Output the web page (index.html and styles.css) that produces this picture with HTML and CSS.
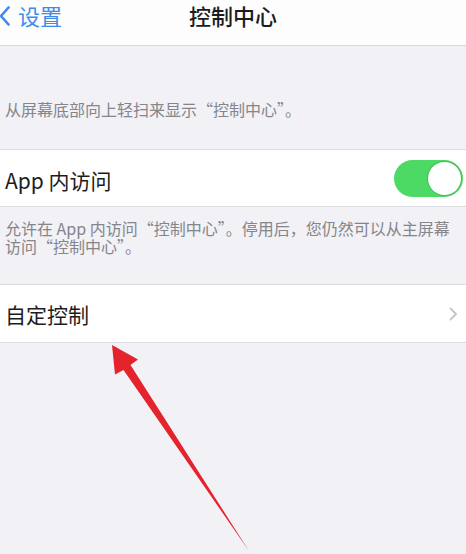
FILE: index.html
```html
<!DOCTYPE html>
<html lang="zh-CN">
<head>
<meta charset="utf-8">
<title>控制中心</title>
<link rel="stylesheet" href="styles.css">
</head>
<body>
<div class="page">
  <header class="nav">
    <div class="back">
      <svg class="back-icon" width="11" height="20" viewBox="0 0 11 20"><path d="M9.5 1.5 L2 10 L9.5 18.5" fill="none" stroke="#3d8bea" stroke-width="2.6" stroke-linecap="round" stroke-linejoin="round"/></svg>
      <span class="back-text">设置</span>
    </div>
    <div class="title">控制中心</div>
    <div class="nav-right"></div>
  </header>

  <div class="section-header">从屏幕底部向上轻扫来显示“控制中心”。</div>

  <div class="group">
    <div class="row row-toggle">
      <span class="label">App 内访问</span>
      <span class="switch"><span class="knob"></span></span>
    </div>
  </div>
  <div class="section-footer">允许在 App 内访问“控制中心”。停用后，您仍然可以从主屏幕访问“控制中心”。</div>

  <div class="group">
    <div class="row row-link">
      <span class="label">自定控制</span>
      <svg class="chev" width="9" height="14" viewBox="0 0 9 14"><path d="M1.5 1.5 L7 7 L1.5 12.5" fill="none" stroke="#c7c7cc" stroke-width="2" stroke-linecap="round" stroke-linejoin="round"/></svg>
    </div>
  </div>

  <svg class="arrow" width="466" height="554" viewBox="0 0 466 554">
    <polygon points="112,345 138,359.5 130.5,365 249,551 123.5,370 115,374.5" fill="#e4232c"/>
  </svg>
</div>
</body>
</html>
```

FILE: styles.css
```css
html, body {
  margin: 0;
  padding: 0;
}
body {
  width: 466px;
  height: 554px;
  overflow: hidden;
  background: #f1f1f6;
  font-family: "Noto Sans CJK SC", "Noto Sans", sans-serif;
  color: #1c1c1e;
}
.page {
  position: relative;
  width: 466px;
  height: 554px;
}
.nav {
  box-sizing: border-box;
  height: 46px;
  padding-top: 2px;
  background: #fdfdfd;
  border-bottom: 1px solid #d9d9dd;
  display: grid;
  grid-template-columns: 1fr auto 1fr;
  align-items: start;
}
.back {
  display: flex;
  align-items: center;
  gap: 8px;
  color: #3d8bea;
  font-size: 22px;
  line-height: 26px;
}
.back-icon {
  display: block;
  margin-left: -1px;
  margin-top: 2px;
}
.title {
  font-size: 22px;
  line-height: 26px;
  font-weight: 500;
  color: #1c1c1e;
}
.section-header {
  padding: 54px 5px 31px;
  font-size: 16px;
  line-height: 18px;
  color: #85858a;
}
.group {
  background: #ffffff;
  border-top: 1px solid #dcdce0;
  border-bottom: 1px solid #dcdce0;
}
.row {
  display: flex;
  align-items: center;
  justify-content: space-between;
  padding: 0 3px 0 5px;
  font-size: 21px;
}
.row-toggle {
  height: 56px;
}
.row-link {
  height: 57px;
  padding-right: 8px;
}
.label {
  line-height: 26px;
}
.row-toggle .label {
  padding-top: 4px;
}
.row-link .label {
  padding-top: 1px;
}
.switch {
  position: relative;
  width: 69px;
  height: 37px;
  border-radius: 19px;
  background: #4cd964;
  display: block;
}
.knob {
  position: absolute;
  right: 2px;
  top: 2px;
  width: 33px;
  height: 33px;
  border-radius: 50%;
  background: #ffffff;
  box-shadow: 0 0 0 1px rgba(0,0,0,0.12);
}
.chev {
  display: block;
}
.section-footer {
  padding: 12px 5px 29px;
  font-size: 16px;
  line-height: 18px;
  color: #85858a;
}
.arrow {
  position: absolute;
  left: 0;
  top: 0;
  pointer-events: none;
}
```
